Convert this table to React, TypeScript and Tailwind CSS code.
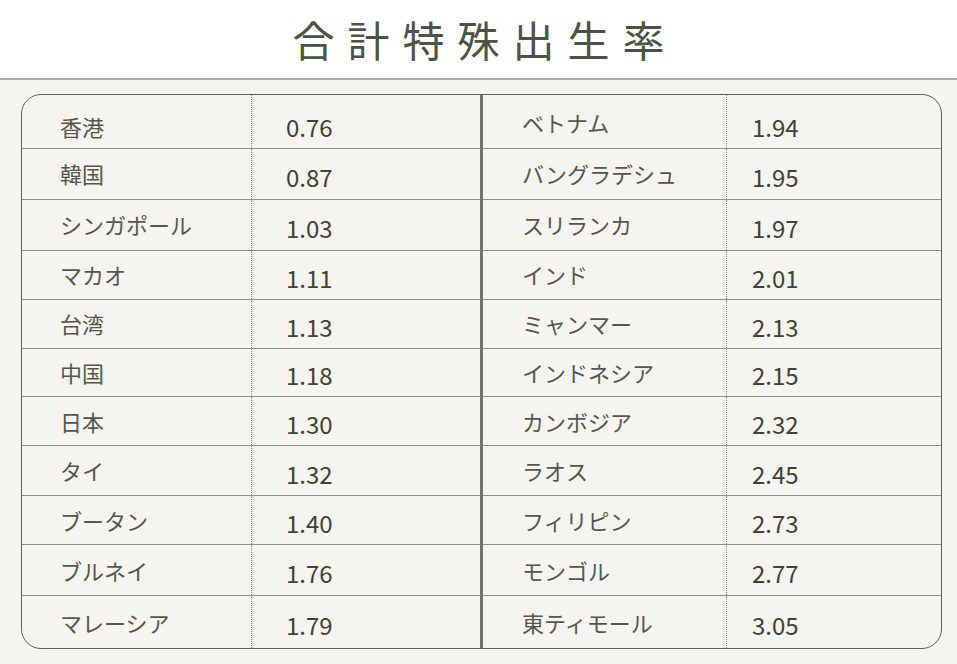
import React from "react";

const left: [string, string][] = [
  ["香港", "0.76"],
  ["韓国", "0.87"],
  ["シンガポール", "1.03"],
  ["マカオ", "1.11"],
  ["台湾", "1.13"],
  ["中国", "1.18"],
  ["日本", "1.30"],
  ["タイ", "1.32"],
  ["ブータン", "1.40"],
  ["ブルネイ", "1.76"],
  ["マレーシア", "1.79"],
];

const right: [string, string][] = [
  ["ベトナム", "1.94"],
  ["バングラデシュ", "1.95"],
  ["スリランカ", "1.97"],
  ["インド", "2.01"],
  ["ミャンマー", "2.13"],
  ["インドネシア", "2.15"],
  ["カンボジア", "2.32"],
  ["ラオス", "2.45"],
  ["フィリピン", "2.73"],
  ["モンゴル", "2.77"],
  ["東ティモール", "3.05"],
];

const heights = [
  "h-[54px]",
  "h-[51px]",
  "h-[51px]",
  "h-[49px]",
  "h-[49px]",
  "h-[49px]",
  "h-[49px]",
  "h-[50px]",
  "h-[49px]",
  "h-[51px]",
  "h-[52px]",
];

const jp = { fontFamily: '"Noto Sans CJK JP", "Noto Sans", sans-serif' };

function Half({
  data,
  nameW,
  namePl,
  valPl,
  side,
}: {
  data: [string, string][];
  nameW: string;
  namePl: string;
  valPl: string;
  side: "l" | "r";
}) {
  return (
    <div className="flex flex-col flex-1">
      {data.map(([n, v], i) => (
        <div
          key={n}
          className={`flex ${heights[i]} ${
            i < data.length - 1 ? "border-b-[1.5px] border-[#8f8e88]" : ""
          }`}
        >
          <div
            className={`${nameW} ${namePl} flex items-center border-r border-dotted border-[#8f8f8a] text-[22px] text-[#55574f] ${
              i === 0 && side === "l" ? "pt-[10px]" : i === 0 ? "pt-[2px]" : ""
            }`}
            style={jp}
          >
            {n}
          </div>
          <div
            className={`flex-1 ${valPl} flex items-center pt-[6px] text-[24px] text-[#404239] ${
              i === 0 ? "pt-[12px]" : ""
            }`}
            style={jp}
          >
            {v}
          </div>
        </div>
      ))}
    </div>
  );
}

export default function App() {
  return (
    <div className="w-[957px] h-[664px] bg-[#f6f4ef] overflow-hidden" style={jp}>
      <div className="h-[80px] bg-white flex items-center justify-center border-b-2 border-[#aaa9a4]">
        <h1
          className="text-[42px] leading-none tracking-[13px] pl-[13px] text-[#4b5345] font-normal"
          style={jp}
        >
          合計特殊出生率
        </h1>
      </div>
      <div className="pt-[14px] pl-[21px]">
        <div className="w-[921px] h-[555px] border border-[#5f5f5a] rounded-[20px] flex overflow-hidden">
          <Half data={left} nameW="w-[230px]" namePl="pl-[38px]" valPl="pl-[34px]" side="l" />
          <div className="w-[3px] bg-[#72726c]" />
          <div className="w-[458px] flex">
            <Half data={right} nameW="w-[244px]" namePl="pl-[39px]" valPl="pl-[25px]" side="r" />
          </div>
        </div>
      </div>
    </div>
  );
}
